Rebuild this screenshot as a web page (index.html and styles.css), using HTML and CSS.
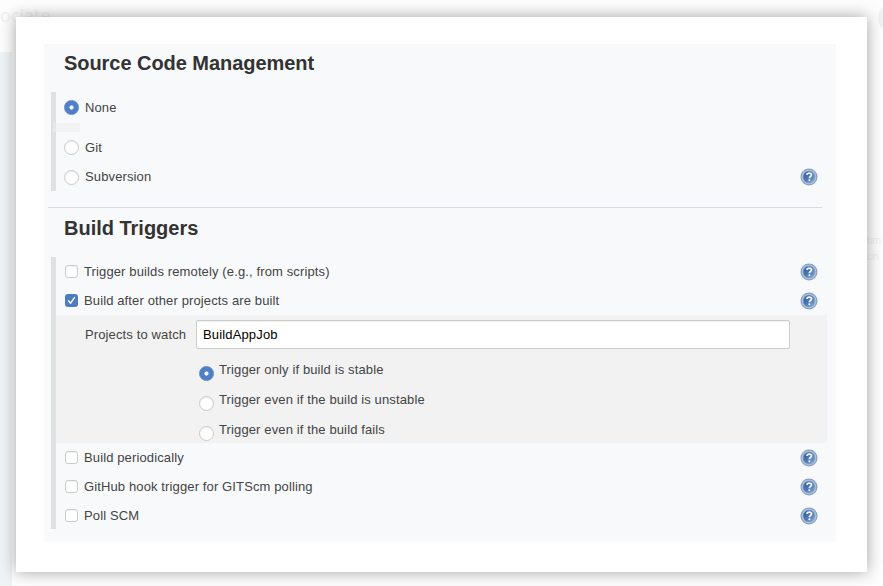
FILE: index.html
```html
<!DOCTYPE html>
<html lang="en">
<head>
<meta charset="utf-8">
<title>Job configuration</title>
<link rel="stylesheet" href="styles.css">
</head>
<body>
<svg width="0" height="0" class="defs" aria-hidden="true">
  <defs>
    <linearGradient id="disc" x1="0" y1="0" x2="1" y2="1">
      <stop offset="0" stop-color="#2a5799"/><stop offset=".5" stop-color="#4c78b2"/><stop offset="1" stop-color="#8dadd2"/>
    </linearGradient>
    <symbol id="help" viewBox="0 0 18 18">
      <circle cx="9" cy="9" r="7.9" fill="#b0c4dd" stroke="#86a0c4" stroke-width="1.2"/>
      <circle cx="9" cy="9" r="5.9" fill="url(#disc)" stroke="#7f9dc5" stroke-width=".6"/>
      <path d="M6.9 6.8C7.1 4.5 11.5 4.5 11.5 6.8C11.5 8.4 9.4 8.4 9.4 10.2" fill="none" stroke="#f4f8fc" stroke-width="1.8"/>
      <circle cx="9.4" cy="12.3" r="1.05" fill="#f4f8fc"/>
    </symbol>
    <symbol id="tick" viewBox="0 0 13 13"><path d="M3.5 6.8L5.6 9.2L9.5 3.6" fill="none" stroke="#fff" stroke-width="1.4" stroke-linecap="round" stroke-linejoin="round"/></symbol>
  </defs>
</svg>
<div class="backdrop-side"></div>
<div class="backdrop-word">ociate</div>
<div class="backdrop-avatar"></div>
<div class="backdrop-note">tim<br>on</div>
<main class="card">
  <div class="panel">
    <section>
      <h2 class="title scm">Source Code Management</h2>
      <div class="group">
        <div class="row r31"><i class="radio on"></i><span class="label">None</span></div>
        <div class="strip"></div>
        <div class="row r31"><i class="radio"></i><span class="label">Git</span></div>
        <div class="row r28"><i class="radio"></i><span class="label">Subversion</span><svg class="help"><use href="#help"/></svg></div>
      </div>
    </section>
    <hr>
    <section>
      <h2 class="title build">Build Triggers</h2>
      <div class="group">
        <div class="row r29"><i class="check"></i><span class="label">Trigger builds remotely (e.g., from scripts)</span><svg class="help"><use href="#help"/></svg></div>
        <div class="row r29"><i class="check on"><svg><use href="#tick"/></svg></i><span class="label">Build after other projects are built</span><svg class="help"><use href="#help"/></svg></div>
        <div class="nested">
          <div class="field"><span class="label watch">Projects to watch</span><div class="input"><span class="job">BuildAppJob</span></div></div>
          <div class="options">
            <div class="option"><i class="radio on"></i><span class="label">Trigger only if build is stable</span></div>
            <div class="option"><i class="radio"></i><span class="label">Trigger even if the build is unstable</span></div>
            <div class="option"><i class="radio"></i><span class="label">Trigger even if the build fails</span></div>
          </div>
        </div>
        <div class="row r29"><i class="check"></i><span class="label">Build periodically</span><svg class="help"><use href="#help"/></svg></div>
        <div class="row r29"><i class="check"></i><span class="label">GitHub hook trigger for GITScm polling</span><svg class="help"><use href="#help"/></svg></div>
        <div class="row r28 last"><i class="check"></i><span class="label">Poll SCM</span><svg class="help"><use href="#help"/></svg></div>
      </div>
    </section>
  </div>
</main>
</body>
</html>
```

FILE: styles.css
```css
* { box-sizing: border-box; }
body {
  margin: 0;
  height: 586px;
  overflow: hidden;
  background: #fdfdfd;
  font: 13px/16px "Liberation Sans", Arial, sans-serif;
  color: #444;
}
.defs { position: absolute; }
.backdrop-side { position: absolute; left: 0; top: 52px; width: 12px; height: 534px; background: #f0f3f5; }
.backdrop-word { position: absolute; left: 0; top: 5px; font: 18px/20px "Open Sans", sans-serif; color: #f0f0f0; }
.backdrop-avatar { position: absolute; left: 878px; top: 4px; width: 28px; height: 28px; border-radius: 50%; background: #f1f1f1; }
.backdrop-note { position: absolute; left: 867px; top: 232px; font: 10px/16px "Open Sans", sans-serif; letter-spacing: -.5px; color: #efefef; }
.card {
  position: relative;
  width: 851px;
  height: 555px;
  margin: 17px 0 0 16px;
  padding: 27px 31px 30px 28px;
  background: #fff;
  box-shadow: 0 0 15px rgba(0, 0, 0, .36);
}
.panel { height: 498px; background: #f8f9fb; overflow: hidden; }
.title {
  margin: 0;
  padding: 7px 0 0 20px;
  height: 48px;
  font-size: 20px;
  line-height: 24px;
  color: #333;
  white-space: nowrap;
}
.scm { letter-spacing: -.05px; }
.build { letter-spacing: -.01px; }
.group { margin-left: 7px; border-left: 5px solid #dfe1e1; }
.row { display: flex; align-items: center; padding: 0 18px 0 8px; }
.r28 { height: 28px; }
.r29 { height: 29px; }
.r31 { height: 31px; }
.last { padding-top: 1px; }
.label { white-space: nowrap; letter-spacing: .125px; }
.radio { flex: none; width: 15px; height: 15px; margin-right: 6px; border: 1px solid #c9c9c9; border-radius: 50%; background: #fff; box-shadow: inset 0 1px 1px rgba(0, 0, 0, .07); }
.radio.on { border-color: #5a86c9; background: radial-gradient(circle, #fff 0 1.7px, #507fc8 2.4px); box-shadow: none; }
.check { flex: none; width: 13px; height: 13px; margin: 0 6px 0 1px; border: 1px solid #cbcbcb; border-radius: 3px; background: #fff; box-shadow: inset 0 1px 1px rgba(0, 0, 0, .06); }
.check.on { border: 0; background: #4e7cc4; box-shadow: none; }
.check svg { display: block; width: 13px; height: 13px; }
.help { width: 18px; height: 18px; margin-left: auto; }
.strip { width: 27px; height: 9px; margin-left: -3px; background: rgba(238, 238, 238, .5); }
hr { height: 1px; margin: 16px 14px 0 4px; border: 0; background: #d9dde1; }
hr + section .title { padding-top: 8px; height: 49px; }
.nested { height: 128px; margin-right: 9px; padding: 5px 37px 0 0; background: #f2f2f2; }
.field { display: flex; align-items: center; padding-left: 29px; }
.watch { width: 111px; }
.input { flex: 1; height: 29px; padding: 6px; border: 1px solid #ccc; border-radius: 2px; background: #fff; color: #000; line-height: 16px; box-shadow: inset 0 1px 1px rgba(0, 0, 0, .06); }
.job { letter-spacing: .15px; }
.options { padding: 11px 0 0 143px; }
.option { display: flex; height: 30px; padding-top: 2px; }
.option .radio { margin: 4px 5px 0 0; }
```
